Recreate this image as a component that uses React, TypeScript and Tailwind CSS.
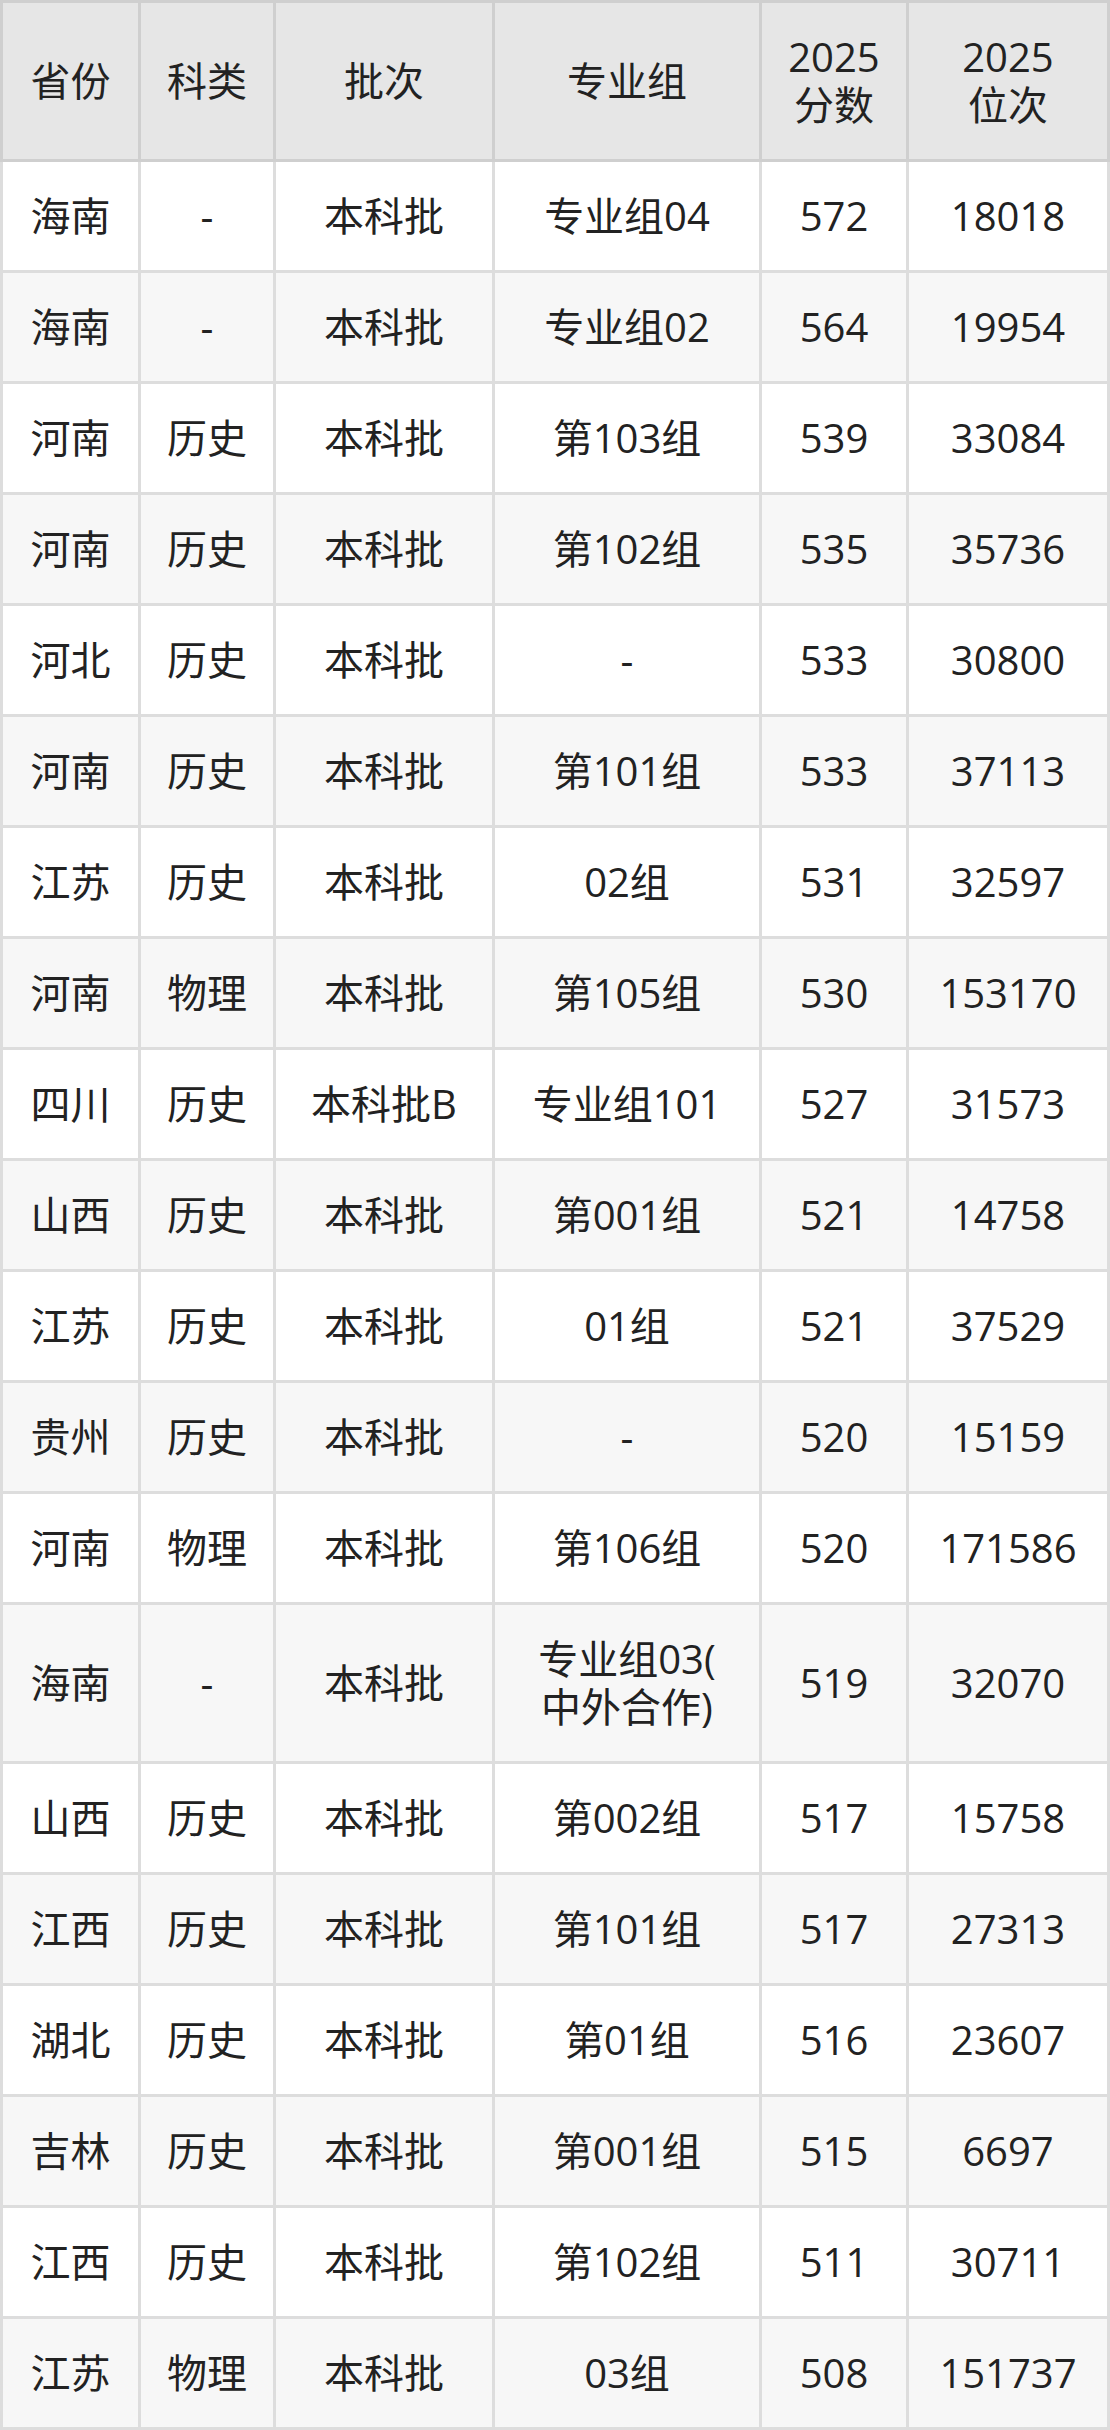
import React from "react";

const rows: string[][] = [
  ["海南", "-", "本科批", "专业组04", "572", "18018"],
  ["海南", "-", "本科批", "专业组02", "564", "19954"],
  ["河南", "历史", "本科批", "第103组", "539", "33084"],
  ["河南", "历史", "本科批", "第102组", "535", "35736"],
  ["河北", "历史", "本科批", "-", "533", "30800"],
  ["河南", "历史", "本科批", "第101组", "533", "37113"],
  ["江苏", "历史", "本科批", "02组", "531", "32597"],
  ["河南", "物理", "本科批", "第105组", "530", "153170"],
  ["四川", "历史", "本科批B", "专业组101", "527", "31573"],
  ["山西", "历史", "本科批", "第001组", "521", "14758"],
  ["江苏", "历史", "本科批", "01组", "521", "37529"],
  ["贵州", "历史", "本科批", "-", "520", "15159"],
  ["河南", "物理", "本科批", "第106组", "520", "171586"],
  ["海南", "-", "本科批", "专业组03(\n中外合作)", "519", "32070"],
  ["山西", "历史", "本科批", "第002组", "517", "15758"],
  ["江西", "历史", "本科批", "第101组", "517", "27313"],
  ["湖北", "历史", "本科批", "第01组", "516", "23607"],
  ["吉林", "历史", "本科批", "第001组", "515", "6697"],
  ["江西", "历史", "本科批", "第102组", "511", "30711"],
  ["江苏", "物理", "本科批", "03组", "508", "151737"],
];

const header = ["省份", "科类", "批次", "专业组", "2025\n分数", "2025\n位次"];

const cols = "grid grid-cols-[135px_132px_216px_264px_144px_198px] gap-x-[3px]";

export default function App() {
  return (
    <div
      className="w-[1110px] text-[40px] leading-[48px] text-[#222222]"
      style={{ fontFamily: '"Open Sans", "Noto Sans CJK SC", sans-serif' }}
    >
      <div className="bg-[#cfcfcf] p-[3px]">
        <div className={cols}>
          {header.map((h, i) => (
            <div
              key={i}
              className="h-[156px] bg-[#e6e6e6] flex items-center justify-center text-center whitespace-pre-line"
            >
              {h}
            </div>
          ))}
        </div>
      </div>
      <div className="bg-[#dddddd] px-[3px] pb-[3px] flex flex-col gap-y-[3px]">
        {rows.map((r, ri) => {
          const tall = r.some((c) => c.includes("\n"));
          return (
            <div key={ri} className={cols}>
              {r.map((c, ci) => (
                <div
                  key={ci}
                  className={`${tall ? "h-[156px]" : "h-[108px]"} ${
                    ri % 2 === 0 ? "bg-white" : "bg-[#f7f7f7]"
                  } flex items-center justify-center text-center whitespace-pre-line`}
                >
                  {c}
                </div>
              ))}
            </div>
          );
        })}
      </div>
    </div>
  );
}
